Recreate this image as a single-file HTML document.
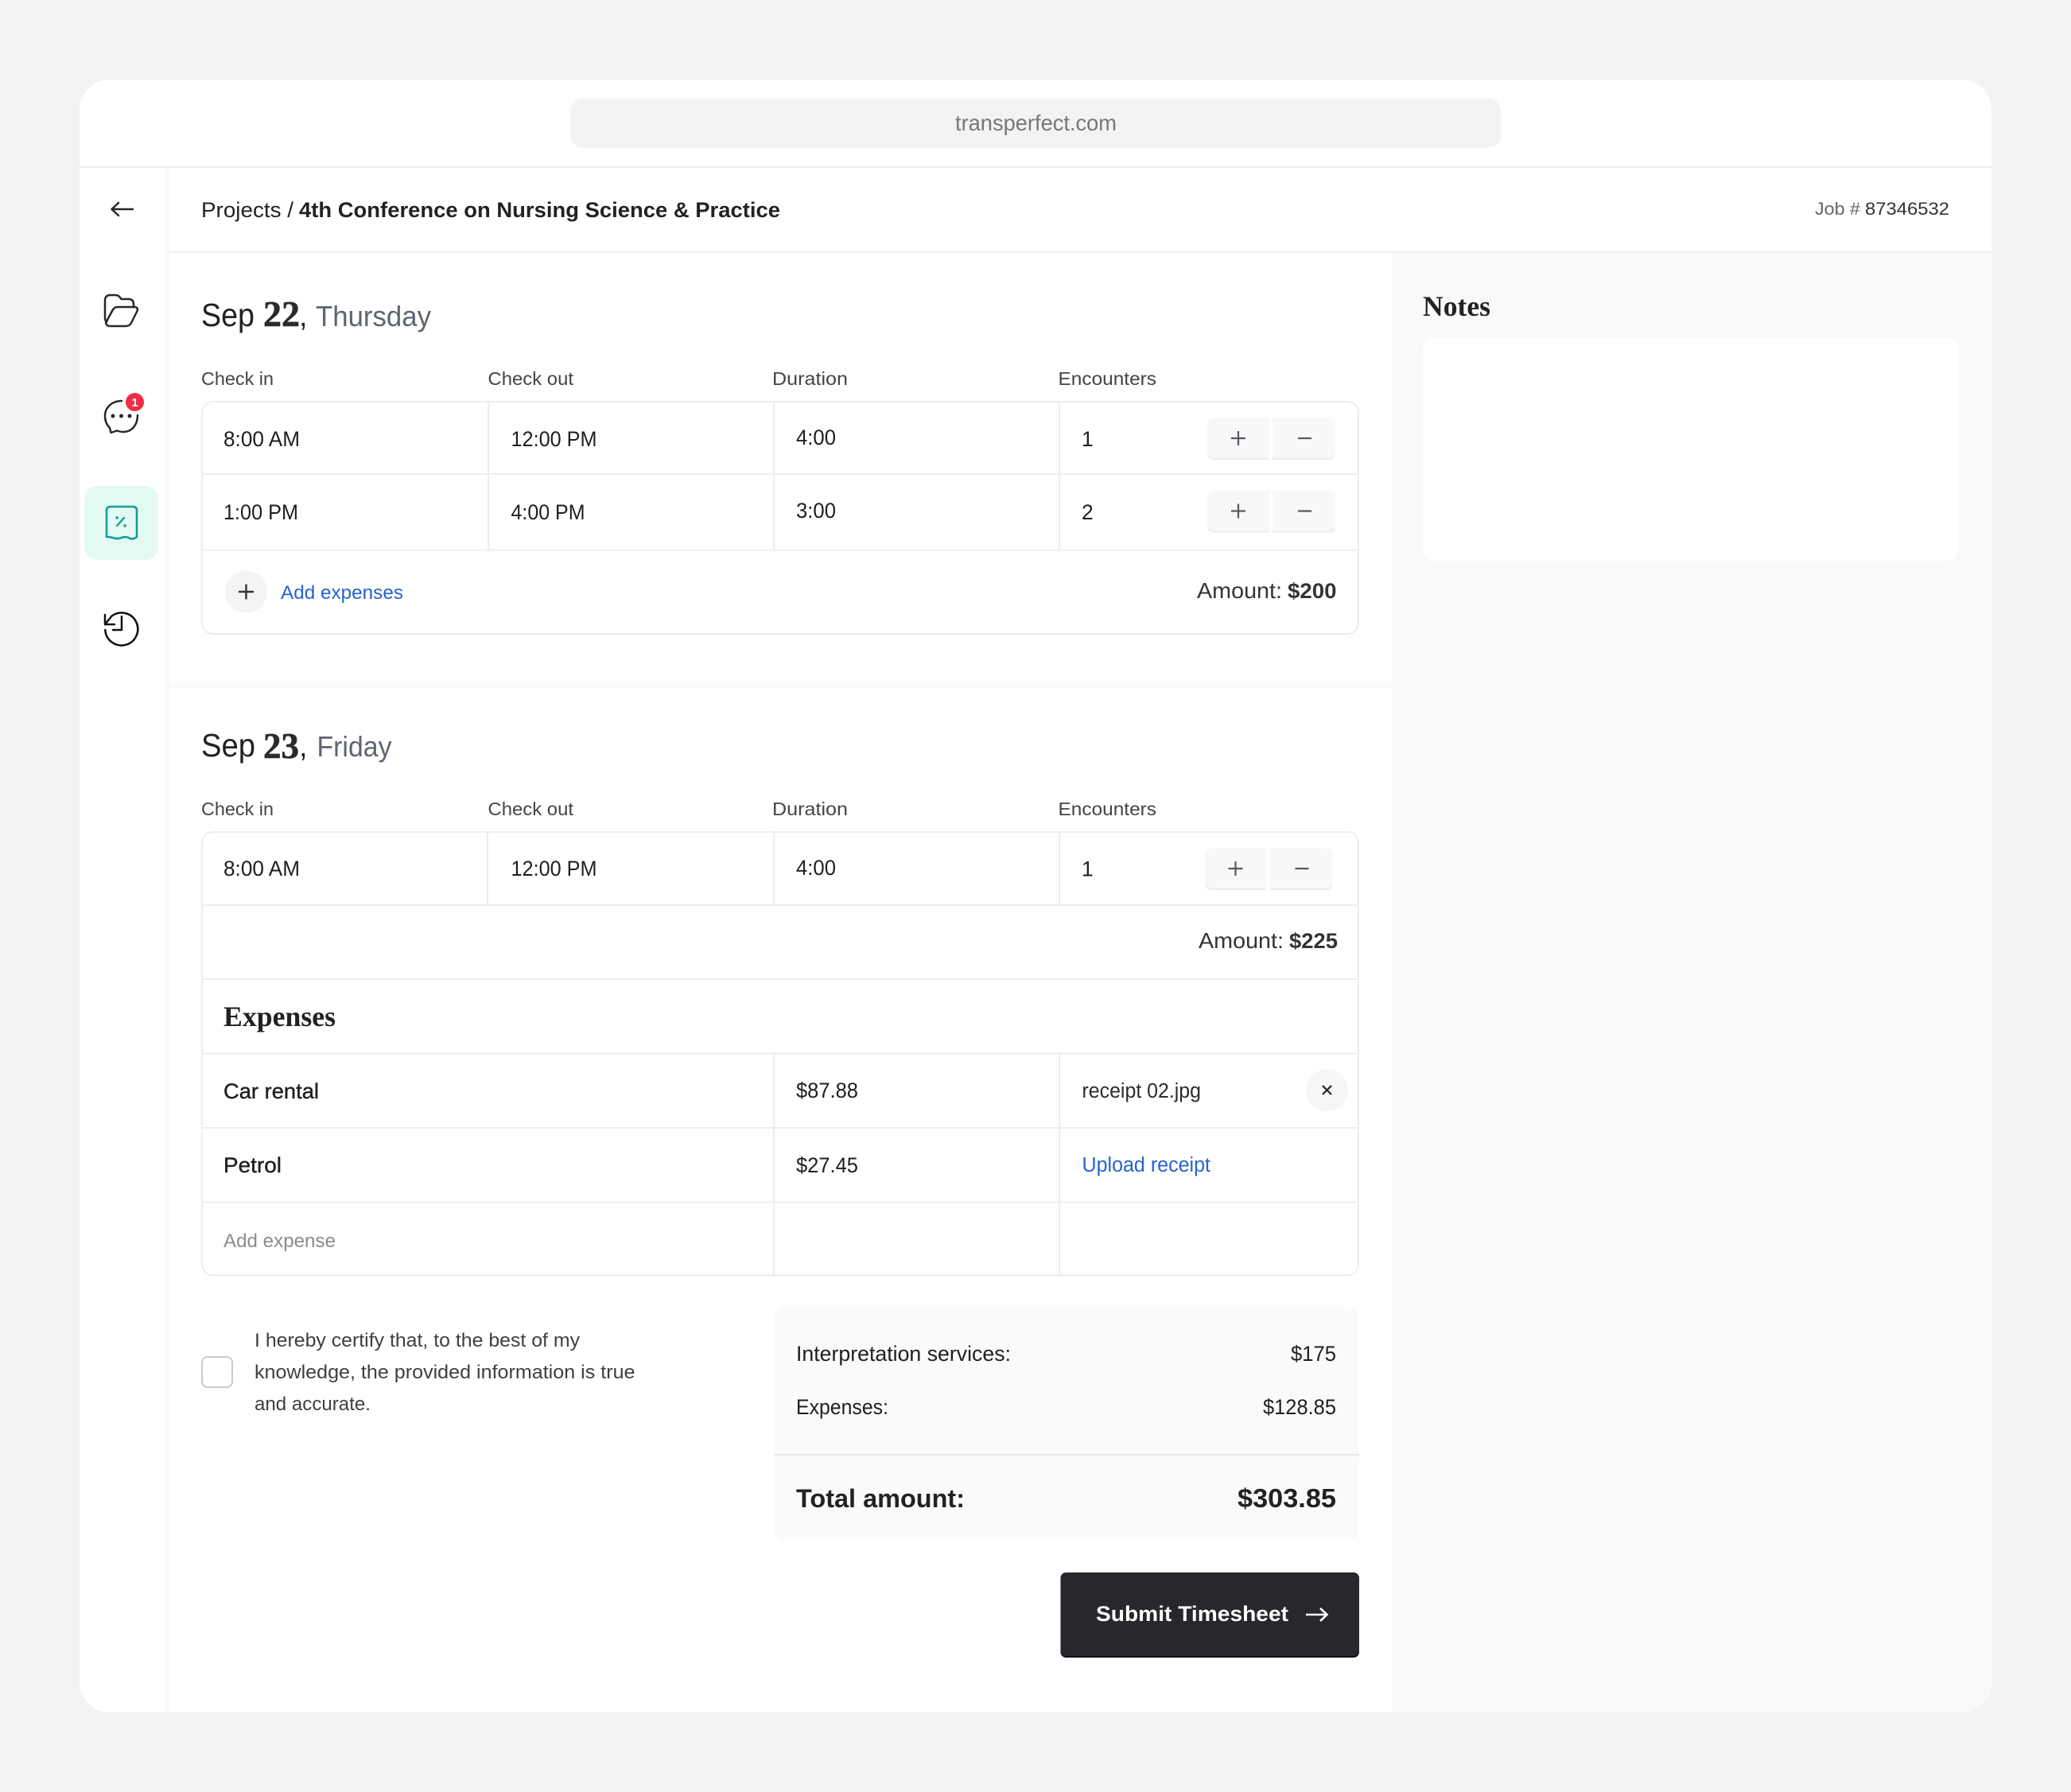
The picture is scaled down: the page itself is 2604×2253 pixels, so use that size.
<!DOCTYPE html>
<html lang="en">
<head>
<meta charset="utf-8">
<title>Timesheet</title>
<style>
html,body{margin:0;padding:0;background:#f3f3f3;width:2604px;height:2253px;overflow:hidden}
svg{display:block}
text{font-family:"Liberation Sans",sans-serif;fill:#222;white-space:pre}
.s{font-family:"Liberation Serif",serif;font-weight:700}
.b{font-weight:700}
.h{font-size:23.500px;fill:#444}
.c{font-size:26.500px;fill:#1f1f1f}
.m{stroke:#1f1f1f;stroke-width:.4px}
.ln{stroke:#ebedef;stroke-width:2;fill:none}
.ic{fill:none;stroke:#26282c;stroke-width:2.500;stroke-linecap:round;stroke-linejoin:round}
.pm{stroke:#555a60;stroke-width:2.200;fill:none}
</style>
</head>
<body>
<svg xmlns="http://www.w3.org/2000/svg" width="2604" height="2253" viewBox="0 0 2604 2253">
<defs><clipPath id="card"><rect x="100" y="100" width="2404" height="2053" rx="38"/></clipPath></defs>
<rect width="2604" height="2253" fill="#f3f3f3"/>
<g clip-path="url(#card)">
<rect x="100" y="100" width="2404" height="2053" fill="#fff"/>
<rect x="1750" y="318" width="754" height="1835" fill="#f9f9f9"/>
<rect x="208" y="211" width="5" height="1942" fill="#f8f8f8"/>
<rect x="213" y="859" width="1537" height="6" fill="#fafafa"/>
<rect x="100" y="209.500" width="2404" height="1.500" fill="#e9e9e9"/>
<rect x="213" y="316" width="2291" height="2" fill="#efefef"/>
</g>
<rect x="717" y="123.500" width="1170" height="62.500" rx="16" fill="#f3f3f3"/>
<text x="1201" y="164" font-size="28" style="fill:#777" textLength="203" lengthAdjust="spacingAndGlyphs">transperfect.com</text>

<!-- Sidebar -->
<path class="ic" d="M141 263H167M149 255L140.500 263L149 271"/>
<path class="ic" d="M134 405Q132 403 132 399V378Q132 371 139 371H145Q149 371 151 374L152.500 376H162Q168 376 168 383V386"/>
<path class="ic" d="M133 406L141 391Q143 386 148 386H169Q174 386 172.500 391L165 406Q163 410 158 410H138Q134 410 133 406Z"/>
<path class="ic" d="M153 504C141 504 132 512 132 523C132 530 135 535 138 538L139.500 544L147 541.500C150 542.500 152 543 155 543C166 543 173 534 173 522"/>
<circle cx="142" cy="523" r="2.500" fill="#26282c"/><circle cx="152.500" cy="523" r="2.500" fill="#26282c"/><circle cx="163" cy="523" r="2.500" fill="#26282c"/>
<circle cx="169.500" cy="505.500" r="11.500" fill="#ef2d45"/>
<text x="169.500" y="511" font-size="15" class="b" text-anchor="middle" style="fill:#fff">1</text>
<rect x="106" y="611" width="93" height="93" rx="16" fill="#e3faf3"/>
<path d="M134 675V642Q134 637 139 637H167Q172 637 172 642V675Q167 679 162.500 676.500T153 676T143.500 676.500T134 675Z" fill="none" stroke="#14a08f" stroke-width="2.600" stroke-linejoin="round"/>
<path d="M147 661L156 651" stroke="#14a08f" stroke-width="2.400" stroke-linecap="round"/>
<circle cx="147" cy="651" r="1.800" fill="#14a08f"/><circle cx="157" cy="661" r="1.800" fill="#14a08f"/>
<path class="ic" d="M132.300 792A20.500 20.500 0 1 0 140.500 774.500L132 785M132 773V785H144M153 775V792H142" style="stroke:#111"/>

<!-- Header -->
<text x="253" y="273" font-size="27" textLength="116" lengthAdjust="spacingAndGlyphs">Projects /</text>
<text x="376" y="273" font-size="27" class="b" textLength="605" lengthAdjust="spacingAndGlyphs">4th Conference on Nursing Science &amp; Practice</text>
<text x="2282" y="270" font-size="22" style="fill:#666" textLength="57" lengthAdjust="spacingAndGlyphs">Job #</text>
<text x="2345" y="270" font-size="22" style="fill:#333" textLength="106" lengthAdjust="spacingAndGlyphs">87346532</text>

<!-- Notes -->
<text x="1789" y="397" font-size="36" class="s" textLength="85" lengthAdjust="spacingAndGlyphs">Notes</text>
<rect x="1789.500" y="424" width="672.500" height="281" rx="12" fill="#fff"/>

<!-- Sep 22 -->
<text x="253" y="410" font-size="41" textLength="67" lengthAdjust="spacingAndGlyphs">Sep</text>
<text x="331" y="410" font-size="46" class="s" style="fill:#2a2b2e;stroke:#2a2b2e;stroke-width:.6px" textLength="46" lengthAdjust="spacingAndGlyphs">22</text>
<text x="376" y="410" font-size="38">,</text>
<text x="397" y="410" font-size="36.500" style="fill:#5f6470" textLength="145" lengthAdjust="spacingAndGlyphs">Thursday</text>
<text x="253" y="484" class="h" textLength="91" lengthAdjust="spacingAndGlyphs">Check in</text>
<text x="613.500" y="484" class="h" textLength="107.500" lengthAdjust="spacingAndGlyphs">Check out</text>
<text x="971" y="484" class="h" textLength="95" lengthAdjust="spacingAndGlyphs">Duration</text>
<text x="1330.500" y="484" class="h" textLength="123.500" lengthAdjust="spacingAndGlyphs">Encounters</text>
<rect x="254" y="505" width="1454" height="292" rx="14" class="ln"/>
<path class="ln" d="M254 596H1708M254 691.500H1708M614 505V691M973 505V691M1332 505V691"/>
<text x="281" y="561" class="c" textLength="96" lengthAdjust="spacingAndGlyphs">8:00 AM</text>
<text x="642.500" y="561" class="c" textLength="108" lengthAdjust="spacingAndGlyphs">12:00 PM</text>
<text x="1001" y="559" class="c" textLength="50" lengthAdjust="spacingAndGlyphs">4:00</text>
<text x="1360" y="561" class="c">1</text>
<text x="281" y="653" class="c" textLength="94" lengthAdjust="spacingAndGlyphs">1:00 PM</text>
<text x="642.500" y="653" class="c" textLength="93" lengthAdjust="spacingAndGlyphs">4:00 PM</text>
<text x="1001" y="651" class="c" textLength="50" lengthAdjust="spacingAndGlyphs">3:00</text>
<text x="1360" y="653" class="c">2</text>

<g>
<path d="M1596 525H1528Q1518 525 1518 535V568Q1518 578 1528 578H1596Z" fill="#f8f8f8"/>
<path d="M1600 525H1669Q1679 525 1679 535V568Q1679 578 1669 578H1600Z" fill="#f8f8f8"/>
<path d="M1518 570Q1518 578 1528 578H1596V576H1528Q1520 576 1518 570ZM1600 576H1669Q1677 576 1679 570Q1679 578 1669 578H1600Z" fill="#ebeced"/>
<path class="pm" d="M1548 551H1566M1557 542V560M1632 551H1649"/>
</g>
<g transform="translate(0 91.500)">
<path d="M1596 525H1528Q1518 525 1518 535V568Q1518 578 1528 578H1596Z" fill="#f8f8f8"/>
<path d="M1600 525H1669Q1679 525 1679 535V568Q1679 578 1669 578H1600Z" fill="#f8f8f8"/>
<path d="M1518 570Q1518 578 1528 578H1596V576H1528Q1520 576 1518 570ZM1600 576H1669Q1677 576 1679 570Q1679 578 1669 578H1600Z" fill="#ebeced"/>
<path class="pm" d="M1548 551H1566M1557 542V560M1632 551H1649"/>
</g>

<circle cx="309.500" cy="744" r="26.500" fill="#f4f4f5"/>
<path d="M300 744H319M309.500 734.500V753.500" stroke="#333" stroke-width="2.400"/>
<text x="353" y="753" font-size="24.500" style="fill:#2563d0" textLength="154" lengthAdjust="spacingAndGlyphs">Add expenses</text>
<text x="1505" y="752" font-size="27.500" style="fill:#333" textLength="107" lengthAdjust="spacingAndGlyphs">Amount:</text>
<text x="1619" y="752" font-size="27" class="b" style="fill:#333" textLength="61.500" lengthAdjust="spacingAndGlyphs">$200</text>

<!-- Sep 23 -->
<text x="253" y="951" font-size="41" textLength="68" lengthAdjust="spacingAndGlyphs">Sep</text>
<text x="331" y="953" font-size="46" class="s" style="fill:#2a2b2e;stroke:#2a2b2e;stroke-width:.6px" textLength="45" lengthAdjust="spacingAndGlyphs">23</text>
<text x="376" y="951" font-size="38">,</text>
<text x="398.500" y="951" font-size="36.500" style="fill:#5f6470" textLength="94" lengthAdjust="spacingAndGlyphs">Friday</text>
<text x="253" y="1025" class="h" textLength="91" lengthAdjust="spacingAndGlyphs">Check in</text>
<text x="613.500" y="1025" class="h" textLength="107.500" lengthAdjust="spacingAndGlyphs">Check out</text>
<text x="971" y="1025" class="h" textLength="95" lengthAdjust="spacingAndGlyphs">Duration</text>
<text x="1330.500" y="1025" class="h" textLength="123.500" lengthAdjust="spacingAndGlyphs">Encounters</text>
<rect x="254" y="1046" width="1454" height="557.500" rx="14" class="ln"/>
<path class="ln" d="M254 1138H1708M254 1231H1708M254 1324.500H1708M254 1418H1708M254 1511.500H1708M613 1046V1138M973 1046V1138M1332 1046V1138M973 1324V1603M1332 1324V1603"/>
<text x="281" y="1101" class="c" textLength="96" lengthAdjust="spacingAndGlyphs">8:00 AM</text>
<text x="642.500" y="1101" class="c" textLength="108" lengthAdjust="spacingAndGlyphs">12:00 PM</text>
<text x="1001" y="1100" class="c" textLength="50" lengthAdjust="spacingAndGlyphs">4:00</text>
<text x="1360" y="1101.500" class="c">1</text>
<g transform="translate(-3.500 541)">
<path d="M1596 525H1528Q1518 525 1518 535V568Q1518 578 1528 578H1596Z" fill="#f8f8f8"/>
<path d="M1600 525H1669Q1679 525 1679 535V568Q1679 578 1669 578H1600Z" fill="#f8f8f8"/>
<path d="M1518 570Q1518 578 1528 578H1596V576H1528Q1520 576 1518 570ZM1600 576H1669Q1677 576 1679 570Q1679 578 1669 578H1600Z" fill="#ebeced"/>
<path class="pm" d="M1548 551H1566M1557 542V560M1632 551H1649"/>
</g>
<text x="1507" y="1192" font-size="27.500" style="fill:#333" textLength="107" lengthAdjust="spacingAndGlyphs">Amount:</text>
<text x="1621" y="1192" font-size="27" class="b" style="fill:#333" textLength="61" lengthAdjust="spacingAndGlyphs">$225</text>
<text x="281" y="1290" font-size="36" class="s" textLength="141" lengthAdjust="spacingAndGlyphs">Expenses</text>
<text x="281" y="1381" class="c m" textLength="120" lengthAdjust="spacingAndGlyphs">Car rental</text>
<text x="281" y="1474" class="c m" textLength="73" lengthAdjust="spacingAndGlyphs">Petrol</text>
<text x="281" y="1568" font-size="24.500" style="fill:#8c8c8c" textLength="141" lengthAdjust="spacingAndGlyphs">Add expense</text>
<text x="1001" y="1380" class="c" textLength="78" lengthAdjust="spacingAndGlyphs">$87.88</text>
<text x="1001" y="1474" class="c" textLength="78" lengthAdjust="spacingAndGlyphs">$27.45</text>
<text x="1360.500" y="1380" font-size="25.500" style="fill:#2b2b2b" textLength="149.500" lengthAdjust="spacingAndGlyphs">receipt 02.jpg</text>
<circle cx="1668.500" cy="1370.500" r="26.500" fill="#f5f6f7"/>
<path d="M1663 1365L1674 1376M1674 1365L1663 1376" stroke="#222" stroke-width="2.200"/>
<text x="1360.500" y="1473" font-size="25.500" style="fill:#2563d0" textLength="161.500" lengthAdjust="spacingAndGlyphs">Upload receipt</text>

<!-- Certify -->
<rect x="254" y="1706" width="38" height="38" rx="7" fill="#fff" stroke="#c7cacf" stroke-width="2"/>
<text x="320" y="1693" font-size="24.500" style="fill:#3f3f3f" textLength="409" lengthAdjust="spacingAndGlyphs">I hereby certify that, to the best of my</text>
<text x="320" y="1733" font-size="24.500" style="fill:#3f3f3f" textLength="478.500" lengthAdjust="spacingAndGlyphs">knowledge, the provided information is true</text>
<text x="320" y="1773" font-size="24.500" style="fill:#3f3f3f" textLength="146" lengthAdjust="spacingAndGlyphs">and accurate.</text>

<!-- Summary -->
<rect x="973" y="1644" width="736" height="292" rx="14" fill="#fafafa"/>
<rect x="973" y="1828" width="736" height="2" fill="#e8e8e8"/>
<text x="1001" y="1711" class="c" textLength="270" lengthAdjust="spacingAndGlyphs">Interpretation services:</text>
<text x="1623" y="1711" class="c" textLength="57" lengthAdjust="spacingAndGlyphs">$175</text>
<text x="1001" y="1778" class="c" textLength="116" lengthAdjust="spacingAndGlyphs">Expenses:</text>
<text x="1588" y="1778" class="c" textLength="92" lengthAdjust="spacingAndGlyphs">$128.85</text>
<text x="1001" y="1895" font-size="32" class="b" textLength="212" lengthAdjust="spacingAndGlyphs">Total amount:</text>
<text x="1556" y="1895" font-size="33" class="b" textLength="124" lengthAdjust="spacingAndGlyphs">$303.85</text>

<!-- Submit -->
<rect x="1333.500" y="1978" width="375.500" height="106" rx="7" fill="#111"/>
<rect x="1333.500" y="1977" width="375.500" height="105" rx="7" fill="#27282c"/>
<text x="1378" y="2038" font-size="27" class="b" style="fill:#fff" textLength="242" lengthAdjust="spacingAndGlyphs">Submit Timesheet</text>
<path d="M1642 2030H1668M1660 2022L1668.500 2030L1660 2038" fill="none" stroke="#fff" stroke-width="2.600"/>
</svg>
</body>
</html>
